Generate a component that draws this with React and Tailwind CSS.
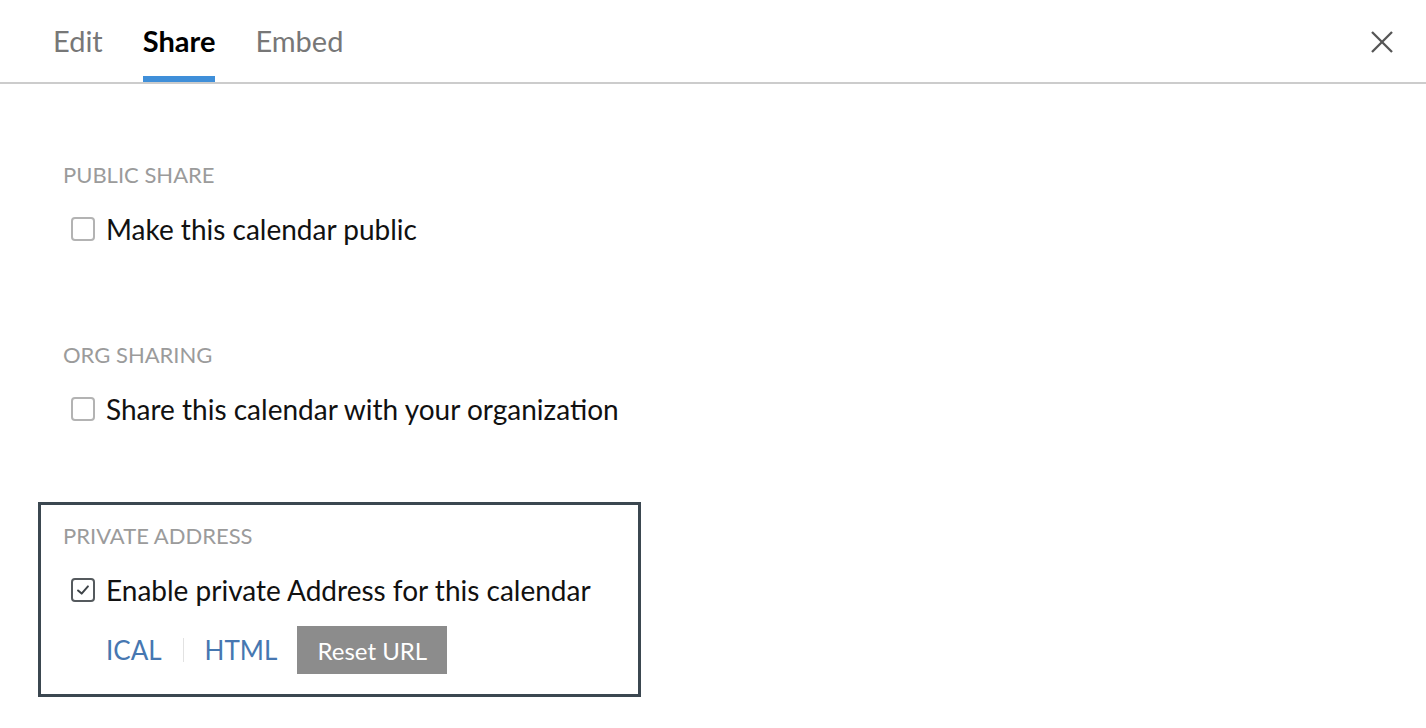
import React from "react";

function Checkbox({ checked }) {
  return (
    <span
      className={
        "flex h-[24px] w-[24px] shrink-0 items-center justify-center rounded-[4px] border-2 bg-white " +
        (checked ? "border-[#555a5e]" : "border-[#b3b3b3]")
      }
    >
      {checked && (
        <svg viewBox="0 0 20 20" className="h-[18px] w-[18px]" fill="none">
          <polyline
            points="4.5,10.5 8.5,14 15.5,6"
            stroke="#3e4448"
            strokeWidth="2.2"
            strokeLinecap="round"
            strokeLinejoin="round"
          />
        </svg>
      )}
    </span>
  );
}

function Section({ label, text, checked, bordered, children, className = "" }) {
  return (
    <div
      className={
        "w-[603px] border-[3px] pl-[22px] pt-[18px] pb-[20px] " +
        (bordered ? "border-[#3b4750] " : "border-transparent ") +
        className
      }
    >
      <div className="text-[22px] leading-[26px] text-[#9b9b9b]">{label}</div>
      <div className="mt-[25px] flex items-center pl-[8px]">
        <Checkbox checked={checked} />
        <span className="ml-[11px] text-[28px] leading-[32px] text-[#111]">{text}</span>
      </div>
      {children}
    </div>
  );
}

export default function App() {
  return (
    <div className="min-h-[728px] w-full bg-white" style={{ fontFamily: "Lato, 'Noto Sans', sans-serif" }}>
      <div className="flex items-start justify-between border-b-2 border-[#cccccc]">
        <div className="flex gap-[40px] pl-[53px]">
          <div className="flex flex-col pt-[24px]">
            <span className="text-[29px] leading-[34px] text-[#777777]">Edit</span>
            <span className="mt-[18px] h-[6px] w-full bg-transparent" />
          </div>
          <div className="flex flex-col pt-[24px]">
            <span className="text-[29px] font-bold leading-[34px] text-black">Share</span>
            <span className="mt-[18px] h-[6px] w-full bg-[#3f8fd9]" />
          </div>
          <div className="flex flex-col pt-[24px]">
            <span className="text-[29px] leading-[34px] text-[#777777]">Embed</span>
            <span className="mt-[18px] h-[6px] w-full bg-transparent" />
          </div>
        </div>
        <svg viewBox="0 0 22 22" className="mr-[33px] mt-[31px] h-[22px] w-[22px]" fill="none">
          <line x1="1" y1="1" x2="21" y2="21" stroke="#555555" strokeWidth="2.3" />
          <line x1="21" y1="1" x2="1" y2="21" stroke="#555555" strokeWidth="2.3" />
        </svg>
      </div>

      <div className="pl-[38px] pt-[57px]">
        <Section label="PUBLIC SHARE" text="Make this calendar public" checked={false} />
        <Section
          label="ORG SHARING"
          text="Share this calendar with your organization"
          checked={false}
          className="mt-[53px]"
        />
        <Section
          label="PRIVATE ADDRESS"
          text="Enable private Address for this calendar"
          checked={true}
          bordered
          className="mt-[54px]"
        >
          <div className="mt-[20px] flex items-center pl-[43px]">
            <span className="text-[26px] leading-[29px] text-[#4677b1]">ICAL</span>
            <span className="mx-[21px] h-[24px] w-px bg-[#e2e2e2]" />
            <span className="text-[26px] leading-[29px] text-[#4677b1]">HTML</span>
            <span className="ml-[20px] flex h-[48px] w-[150px] items-center justify-center bg-[#8c8c8c] text-[24px] leading-[29px] text-white">
              Reset URL
            </span>
          </div>
        </Section>
      </div>
    </div>
  );
}
